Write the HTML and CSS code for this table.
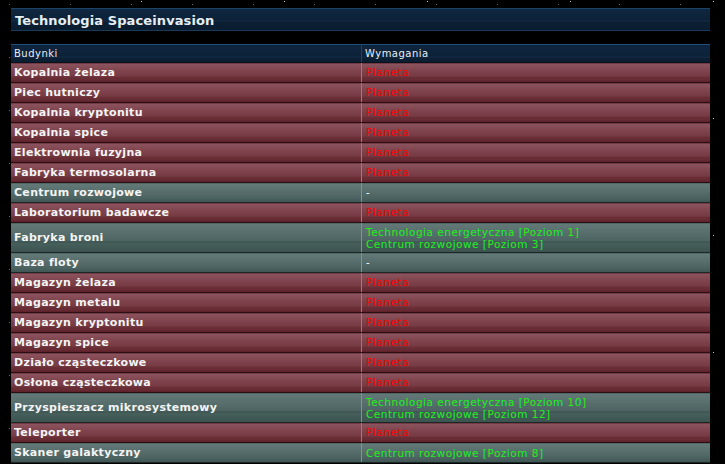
FILE: index.html
```html
<!DOCTYPE html>
<html lang="pl">
  <head>
    <meta charset="UTF-8" />
    <title>Technologia Spaceinvasion</title>
    <link rel="stylesheet" href="styles.css">
  </head>
  <body>
    <div class="page">
      <div class="tytul">Technologia Spaceinvasion</div>

      <table class="tech">
        <thead>
          <tr>
            <th class="kol1">Budynki</th>
            <th>Wymagania</th>
          </tr>
        </thead>
        <tbody>
          <tr class="brak"><td>Kopalnia żelaza</td><td class="planeta">Planeta</td></tr>
          <tr class="brak"><td>Piec hutniczy</td><td class="planeta">Planeta</td></tr>
          <tr class="brak"><td>Kopalnia kryptonitu</td><td class="planeta">Planeta</td></tr>
          <tr class="brak"><td>Kopalnia spice</td><td class="planeta">Planeta</td></tr>
          <tr class="brak"><td>Elektrownia fuzyjna</td><td class="planeta">Planeta</td></tr>
          <tr class="brak"><td>Fabryka termosolarna</td><td class="planeta">Planeta</td></tr>
          <tr class="ok"><td>Centrum rozwojowe</td><td class="nic">-</td></tr>
          <tr class="brak"><td>Laboratorium badawcze</td><td class="planeta">Planeta</td></tr>
          <tr class="ok podwojny">
            <td>Fabryka broni</td>
            <td class="wym">Technologia energetyczna [Poziom 1]<br>Centrum rozwojowe [Poziom 3]</td>
          </tr>
          <tr class="ok"><td>Baza floty</td><td class="nic">-</td></tr>
          <tr class="brak"><td>Magazyn żelaza</td><td class="planeta">Planeta</td></tr>
          <tr class="brak"><td>Magazyn metalu</td><td class="planeta">Planeta</td></tr>
          <tr class="brak"><td>Magazyn kryptonitu</td><td class="planeta">Planeta</td></tr>
          <tr class="brak"><td>Magazyn spice</td><td class="planeta">Planeta</td></tr>
          <tr class="brak"><td>Działo cząsteczkowe</td><td class="planeta">Planeta</td></tr>
          <tr class="brak"><td>Osłona cząsteczkowa</td><td class="planeta">Planeta</td></tr>
          <tr class="ok podwojny">
            <td>Przyspieszacz mikrosystemowy</td>
            <td class="wym">Technologia energetyczna [Poziom 10]<br>Centrum rozwojowe [Poziom 12]</td>
          </tr>
          <tr class="brak"><td>Teleporter</td><td class="planeta">Planeta</td></tr>
          <tr class="ok"><td>Skaner galaktyczny</td><td class="wym">Centrum rozwojowe [Poziom 8]</td></tr>
        </tbody>
      </table>
    </div>
  </body>
</html>
```

FILE: styles.css
```css
body {
  margin: 0;
  padding: 0;
  background-color: #000;
  background-image:
    radial-gradient(circle, #9a9a9a 0.6px, transparent 1px),
    radial-gradient(circle, #6c6c6c 0.6px, transparent 1px),
    radial-gradient(circle, #c8c8c8 0.5px, transparent 1px);
  background-size: 97px 83px, 61px 53px, 143px 117px;
  background-position: 12px 5px, 40px 31px, 70px 60px;
  font-family: "DejaVu Sans", Verdana, sans-serif;
  color: #fff;
  height: 464px;
  overflow: hidden;
}

.page {
  width: 699px;
  padding: 8px 0 0 11px;
}

.tytul {
  height: 23px;
  box-sizing: border-box;
  padding: 4px 0 0 4px;
  font-size: 13px;
  font-weight: bold;
  letter-spacing: 0.1px;
  color: #e6eef4;
  background: linear-gradient(#0f2740 0, #0d2238 50%, #112a44 58%, #0c1f33 62%, #0b1d30 100%);
  border-top: 1px solid #1d4466;
  border-bottom: 1px solid #1a3a5a;
}

.tech {
  width: 100%;
  margin-top: 13px;
  border-collapse: collapse;
  font-size: 11px;
  line-height: 13px;
}

.tech th {
  height: 17px;
  padding: 0 0 0 3px;
  text-align: left;
  font-weight: normal;
  font-size: 10px;
  letter-spacing: 0.5px;
  color: #e8eef4;
  background: linear-gradient(#0e2540 0, #0d2238 65%, #163352 70%, #0c1f33 74%, #0b1d30 100%);
  border-top: 1px solid #23507a;
  border-bottom: 1px solid #06121e;
}

.tech th.kol1,
.tech td:first-child {
  width: 347px;
  border-right: 1px solid #8b8f94;
}

.tech th.kol1 {
  border-right-color: #1d4466;
}

.tech td {
  height: 19px;
  padding: 0 0 0 3px;
  border-bottom: 1px solid #2a1015;
}

.tech td:first-child {
  font-weight: bold;
  color: #f4f4f4;
  letter-spacing: 0.3px;
}

.brak td {
  background:
    linear-gradient(#8c5560 0, #80454f 35%, #743841 70%, #62262f 74%, #6c2f38 80%, #5a1e28 100%);
}

.brak td:first-child {
  border-right-color: #a07880;
}

.ok td {
  background: linear-gradient(#637a78 0, #566d6b 45%, #4a615f 80%, #3e5452 100%);
  border-bottom-color: #1c2827;
}

.ok td:first-child {
  border-right-color: #7f9391;
}

.podwojny td {
  height: 29px;
  background: linear-gradient(#637a78 0, #566d6b 35%, #4d6462 60%, #3a504e 64%, #46605c 68%, #3c524f 100%);
}

.tech td.planeta {
  padding-left: 4px;
  color: #ff0000;
  font-size: 10.5px;
  letter-spacing: 0.6px;
}

.tech td.wym {
  padding-left: 4px;
  color: #1cf01c;
  font-size: 10.5px;
  letter-spacing: 0.5px;
  line-height: 12px;
}

.tech td.nic {
  padding-left: 4px;
  font-size: 10px;
}
```
